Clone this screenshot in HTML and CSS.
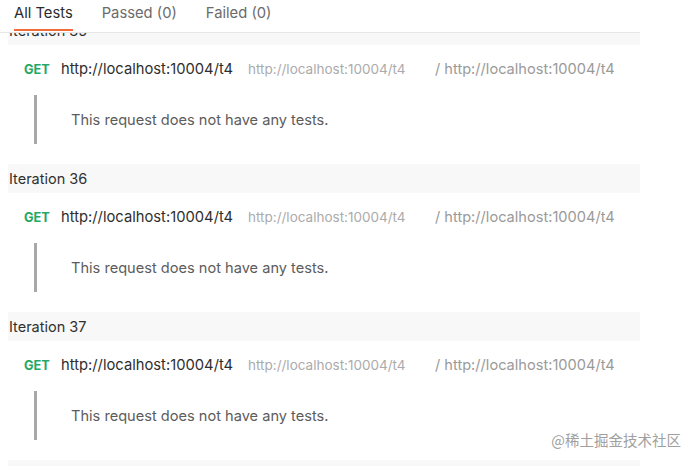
FILE: index.html
```html
<!DOCTYPE html>
<html>
<head>
<meta charset="utf-8">
<link rel="stylesheet" href="styles.css">
</head>
<body>
<div class="page">
  <div class="tabs">
    <div class="tab active">All Tests</div>
    <div class="tab">Passed (0)</div>
    <div class="tab">Failed (0)</div>
  </div>
  <div class="list">
    <div class="items">
      <div class="iter first">
        <div class="iter-head">Iteration 35</div>
        <div class="req"><span class="method">GET</span><span class="name">http://localhost:10004/t4</span><span class="url">http://localhost:10004/t4</span><span class="path">/ http://localhost:10004/t4</span></div>
        <div class="note"><span>This request does not have any tests.</span></div>
      </div>
      <div class="iter">
        <div class="iter-head">Iteration 36</div>
        <div class="req"><span class="method">GET</span><span class="name">http://localhost:10004/t4</span><span class="url">http://localhost:10004/t4</span><span class="path">/ http://localhost:10004/t4</span></div>
        <div class="note"><span>This request does not have any tests.</span></div>
      </div>
      <div class="iter">
        <div class="iter-head">Iteration 37</div>
        <div class="req"><span class="method">GET</span><span class="name">http://localhost:10004/t4</span><span class="url">http://localhost:10004/t4</span><span class="path">/ http://localhost:10004/t4</span></div>
        <div class="note"><span>This request does not have any tests.</span></div>
      </div>
      <div class="iter">
        <div class="iter-head"></div>
      </div>
    </div>
  </div>
  <div class="watermark">@稀土掘金技术社区</div>
</div>
</body>
</html>
```

FILE: styles.css
```css
html, body {
  margin: 0;
  padding: 0;
  background: #ffffff;
}
body {
  font-family: Inter, "Noto Sans CJK SC", sans-serif;
  color: #333333;
  width: 695px;
  height: 466px;
  overflow: hidden;
}
.page {
  position: relative;
  width: 695px;
  height: 466px;
}
.tabs {
  display: flex;
  width: 626px;
  height: 32px;
  border-bottom: 1px solid #e6e6e6;
  padding-left: 14px;
}
.tab {
  box-sizing: border-box;
  height: 31px;
  padding-top: 4px;
  font-size: 14.75px;
  line-height: 18px;
  color: #6b6b6b;
  margin-right: 29px;
  border-bottom: 2px solid transparent;
}
.tab.active {
  color: #2b2b2b;
  border-bottom-color: #f26b3a;
}
.list {
  height: 433px;
  overflow: hidden;
  padding-left: 8px;
}
.items {
  width: 632px;
}
.iter.first {
  margin-top: -17px;
}
.iter-head {
  height: 29px;
  line-height: 29px;
  background: #f8f8f8;
  font-size: 14.5px;
  color: #303030;
  padding-left: 1px;
}
.req {
  display: flex;
  align-items: center;
  height: 20px;
  margin-top: 14px;
  padding-left: 16px;
  white-space: nowrap;
}
.method {
  font-size: 12.75px;
  font-weight: 700;
  color: #26a862;
  width: 37px;
}
.name {
  font-size: 14.75px;
  color: #2e2e2e;
  width: 187px;
}
.url {
  font-size: 13.5px;
  color: #ababab;
  width: 187px;
}
.path {
  font-size: 14.6px;
  color: #9a9a9a;
}
.note {
  display: flex;
  align-items: center;
  margin: 16px 0 20px 26px;
  height: 49px;
  border-left: 3px solid #a8a8a8;
  padding-left: 34px;
  font-size: 14.6px;
  color: #5c5c5c;
}
.watermark {
  position: absolute;
  right: 14px;
  bottom: 16px;
  font-size: 14.5px;
  color: #a0a0a0;
  font-family: "Noto Sans CJK SC", sans-serif;
}
```
